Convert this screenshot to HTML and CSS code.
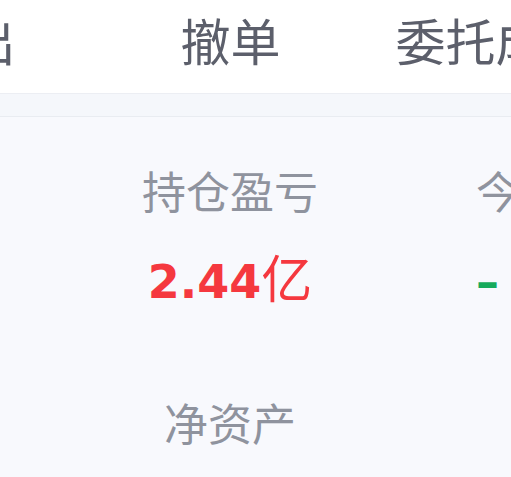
FILE: index.html
```html
<!DOCTYPE html>
<html>
<head>
    <title>交易</title>
    <link rel="stylesheet" href="styles.css">
</head>
<body>
<div class="tabs">
    <div class="tab">卖出</div>
    <div class="tab">撤单</div>
    <div class="tab">委托成交</div>
</div>
<div class="band"></div>
<div class="stats">
    <div class="stat">
        <div class="stat-label">持仓盈亏</div>
        <div class="stat-value up">2.44<span class="unit">亿</span></div>
    </div>
    <div class="stat stat-left">
        <div class="stat-label">今日盈亏</div>
        <div class="stat-value down"><span class="dash">–</span></div>
    </div>
    <div class="stat">
        <div class="stat-label">净资产</div>
    </div>
</div>
</body>
</html>
```

FILE: styles.css
```css
body {
    margin: 0;
    padding: 0;
    font-family: "Noto Sans CJK SC", sans-serif;
    background-color: #f8f9fd;
    overflow: hidden;
}

/* 顶部标签栏 */
.tabs {
    display: flex;
    box-sizing: border-box;
    height: 93px;
    padding-bottom: 16px;
    background-color: #fff;
    margin-left: -167px;
    white-space: nowrap;
}

.tab {
    flex: 0 0 265px;
    display: flex;
    align-items: center;
    justify-content: center;
    font-size: 50px;
    color: #5c5f6b;
}

.band {
    height: 22px;
    background-color: #f5f7fb;
    border-top: 1px solid #eceef3;
    border-bottom: 1px solid #e9ecf1;
}

/* 资产数据 */
.stats {
    display: grid;
    grid-template-columns: 336px 336px;
    padding-left: 62px;
    padding-top: 43px;
    white-space: nowrap;
}

.stat {
    text-align: center;
    height: 232px;
}

.stat-left {
    text-align: left;
    padding-left: 78px;
}

.stat-label {
    font-size: 44px;
    line-height: 60px;
    color: #8f939e;
}

.stat-value {
    margin-top: 26px;
    height: 60px;
    font-family: "DejaVu Sans", sans-serif;
    font-weight: bold;
    font-size: 46px;
    line-height: 60px;
}

.unit {
    font-family: "Noto Sans CJK SC", sans-serif;
    font-weight: normal;
    font-size: 51px;
}

.dash {
    display: inline-block;
    transform: translateY(6px);
}

.up {
    color: #f5383f;
}

.down {
    color: #16aa5c;
}
```
